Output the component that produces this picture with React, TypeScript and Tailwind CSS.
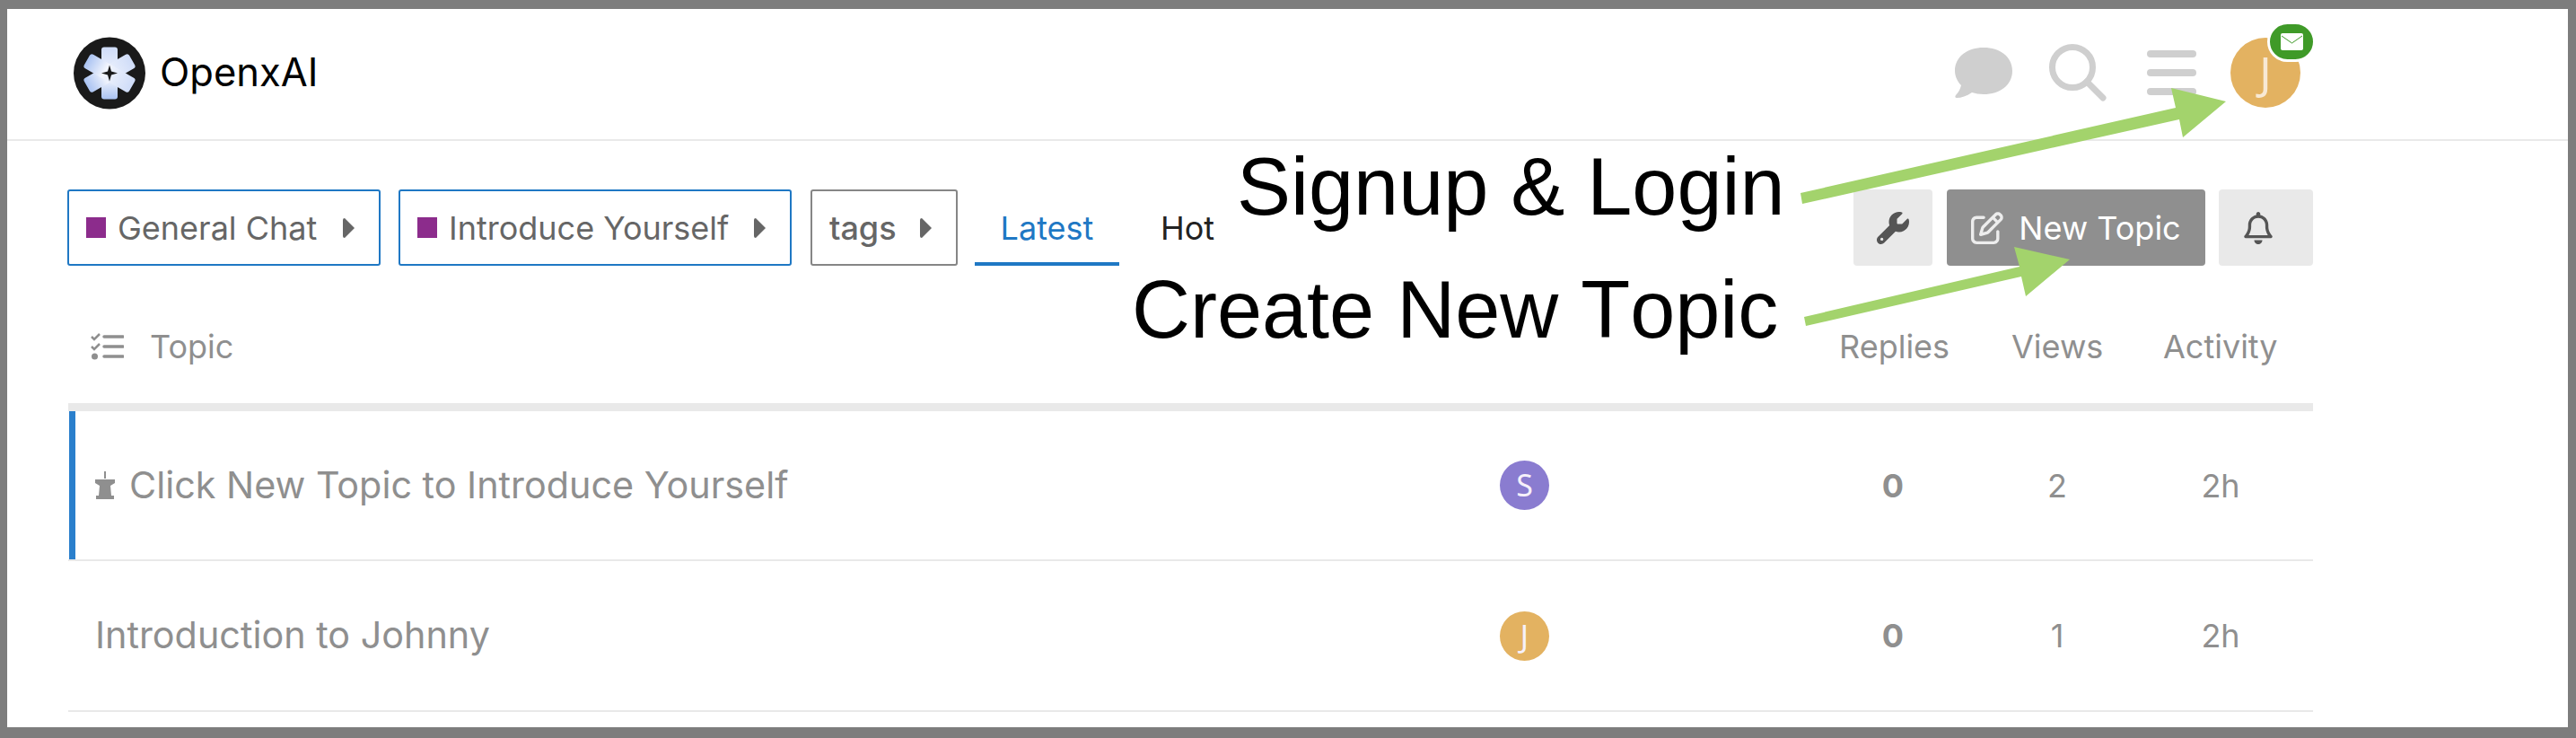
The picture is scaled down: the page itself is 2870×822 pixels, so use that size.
import { FaRegBell, FaRegPenToSquare, FaWrench } from "react-icons/fa6";

// Page is a Discourse topic list with two green call-out arrows laid over it.

const Crumb = ({
  label,
  dot,
  blue,
  width,
}: {
  label: string;
  dot?: boolean;
  blue?: boolean;
  width: string;
}) => (
  <div
    className={`flex h-[85px] items-center rounded-[3px] border-2 pr-[27px] pl-[19px] ${width} ${
      blue ? "border-[#1f78c4]" : "border-[#868686]"
    }`}
  >
    {dot && <span className="mr-[13px] h-[23px] w-[22px] bg-[#8c2c8c]" />}
    <span className={`text-[36px] text-[#666666] ${dot ? "font-normal" : "font-medium"}`}>{label}</span>
    <svg viewBox="0 0 13 22" className="ml-auto h-[22px] w-[13px] fill-[#666666]">
      <path d="M2 0 L13 11 L2 22 Q0 22 0 20 L0 2 Q0 0 2 0 Z" />
    </svg>
  </div>
);

const Avatar = ({ letter, color }: { letter: string; color: string }) => (
  <div
    className={`flex h-[55px] w-[55px] items-center justify-center rounded-full font-['Noto_Sans',sans-serif] text-[34px] text-[#f6f1fa] ${color}`}
  >
    {letter}
  </div>
);

const Row = ({
  title,
  pinned,
  letter,
  color,
  views,
}: {
  title: string;
  pinned?: boolean;
  letter: string;
  color: string;
  views: string;
}) => (
  <div
    className={`relative flex items-center border-b-2 border-[#e9e9e9] text-[#8f8f8f] ${
      pinned ? "h-[167px]" : "h-[168px]"
    }`}
  >
    {pinned && <span className="absolute top-0 bottom-0 left-px w-[7px] bg-[#2a7fcc]" />}
    <div className="flex w-[1595px] items-center pl-[30px] text-[41.3px]">
      {pinned && (
        <svg viewBox="0 0 22 31" className="mr-[16px] h-[31px] w-[22px] fill-[#8f8f8f]">
          <path d="M10 0h2v8h-2z M0 9h22v4l-5 3 1 11h3v4H1v-4h3l1-11-5-3z" />
        </svg>
      )}
      {title}
    </div>
    <Avatar letter={letter} color={color} />
    <div className="ml-[353px] w-[60px] text-center text-[36px] font-bold">0</div>
    <div className="ml-[123px] w-[60px] text-center text-[36px]">{views}</div>
    <div className="ml-[122px] w-[60px] text-center text-[36px]">2h</div>
  </div>
);

export default function App() {
  return (
    <div className="relative h-[822px] w-[2870px] overflow-hidden border-t-[10px] border-r-[9px] border-b-[12px] border-l-[8px] border-[#7d7d7d] bg-white font-['Inter',sans-serif]">
      <header className="flex h-[147px] items-center justify-between border-b-2 border-[#e9e9e9] pr-[298px] pb-[3px] pl-[74px]">
        <div className="flex items-center gap-[16px]">
          <svg viewBox="0 0 80 80" className="h-[81px] w-[80px]">
            <defs>
              <linearGradient id="star" x1="0" y1="0" x2="0" y2="1">
                <stop offset="0" stopColor="#cfdcf8" />
                <stop offset="0.6" stopColor="#f2f5fd" />
                <stop offset="1" stopColor="#a9c2f2" />
              </linearGradient>
            </defs>
            <circle cx="40" cy="40" r="40" fill="#1a1a1a" />
            <g fill="url(#star)">
              <rect x="31" y="11" width="18" height="58" rx="3" />
              <rect x="31" y="11" width="18" height="58" rx="3" transform="rotate(60 40 40)" />
              <rect x="31" y="11" width="18" height="58" rx="3" transform="rotate(120 40 40)" />
            </g>
            <path d="M40 31 L42 38 L49 40 L42 42 L40 49 L38 42 L31 40 L38 38 Z" fill="#1a1a1a" />
          </svg>
          <span className="text-[43.5px] text-black">OpenxAI</span>
        </div>
        <div className="flex items-center">
          <svg viewBox="0 0 64 56" className="h-[56px] w-[64px] fill-[#cfcfcf]">
            <path d="M32 0C50 0 64 10 64 26S50 52 32 52C27 52 23 51 19 50 13 54 7 56 2 56 0 56 0 54 1 53 4 50 6 46 7 42 3 38 0 32 0 26 0 10 14 0 32 0Z" />
          </svg>
          <svg viewBox="0 0 64 64" className="ml-[41px] h-[64px] w-[64px] fill-none stroke-[#cfcfcf] stroke-[7]">
            <circle cx="26" cy="26" r="22.5" />
            <path d="M42 42 L60 60" strokeLinecap="round" />
          </svg>
          <div className="ml-[45px] flex w-[55px] flex-col gap-[13px]">
            <span className="h-[8px] rounded-full bg-[#cfcfcf]" />
            <span className="h-[8px] rounded-full bg-[#cfcfcf]" />
            <span className="h-[8px] rounded-full bg-[#cfcfcf]" />
          </div>
          <div className="relative ml-[38px] flex h-[78px] w-[78px] items-center justify-center rounded-full bg-[#e3b261] font-['Noto_Sans',sans-serif] text-[49px] text-[#f8e9d4]">
            J
            <div className="absolute -top-[18px] -right-[17px] flex h-[45px] w-[54px] items-center justify-center rounded-full border-[3px] border-white bg-[#3f9a28]">
              <svg viewBox="0 0 25 19" className="h-[19px] w-[25px]">
                <rect width="25" height="19" rx="2" fill="#fff" />
                <path d="M1 3 L12.5 11 L24 3" fill="none" stroke="#3f9a28" strokeWidth="1" />
              </svg>
            </div>
          </div>
        </div>
      </header>

      <main className="pr-[284px] pl-[68px]">
        <div className="mt-[54px] flex h-[85px] items-center">
          <div className="-ml-px">
            <Crumb label="General Chat" dot blue width="w-[349px]" />
          </div>
          <div className="ml-[20px]">
            <Crumb label="Introduce Yourself" dot blue width="w-[438px]" />
          </div>
          <div className="ml-[21px]">
            <Crumb label="tags" width="w-[164px]" />
          </div>
          <div className="ml-[19px] flex h-[85px] w-[161px] items-center justify-center border-b-[4px] border-[#1f78c4] pt-[4px] text-[36px] text-[#1f78c4]">
            Latest
          </div>
          <div className="ml-[46px] text-[36px] text-[#222222]">Hot</div>
          <div className="ml-auto flex h-[85px] w-[88px] items-center justify-center rounded-[4px] bg-[#e9e9e9]">
            <FaWrench className="h-[36px] w-[36px] text-[#555555]" />
          </div>
          <div className="ml-[16px] flex h-[85px] w-[288px] items-center justify-center gap-[17px] rounded-[4px] bg-[#8f8f8f] text-[36px] text-white">
            <FaRegPenToSquare className="h-[36px] w-[36px] text-[#ededed]" />
            New Topic
          </div>
          <div className="ml-[15px] flex h-[85px] w-[105px] items-center justify-center rounded-[4px] bg-[#e9e9e9] pr-[18px]">
            <FaRegBell className="h-[36px] w-[36px] text-[#555555]" />
          </div>
        </div>

        <div className="flex h-[162px] items-center border-b-[9px] border-[#e9e9e9] pt-[26px] text-[36px] text-[#8f8f8f]">
          <div className="flex w-[1973px] items-center pl-[25px]">
            <svg viewBox="0 0 37 30" className="mr-[29px] h-[30px] w-[37px] fill-none stroke-[#8f8f8f] stroke-[3.5]">
              <path d="M1 4 L4 7 L10 1 M1 15 L4 18 L10 12" strokeWidth="2.5" />
              <path d="M15 4 H36 M15 15 H36 M15 26 H36" strokeLinecap="round" />
              <circle cx="4.5" cy="26" r="3.5" fill="#8f8f8f" stroke="none" />
            </svg>
            Topic
          </div>
          <div className="w-[192px]">Replies</div>
          <div className="w-[169px]">Views</div>
          <div>Activity</div>
        </div>

        <Row title="Click New Topic to Introduce Yourself" pinned letter="S" color="bg-[#8a7cd0]" views="2" />
        <Row title="Introduction to Johnny" letter="J" color="bg-[#e3b261]" views="1" />
      </main>

      {/* call-outs sit on top of the page */}
      <svg
        viewBox="0 0 2870 822"
        className="pointer-events-none absolute -top-[10px] -left-[8px] h-[822px] w-[2870px]"
      >
        <path
          d="M2006 215 L2424 120 L2419 98 L2480 113 L2432 153 L2428 133 L2008 227 Z"
          fill="#a3d36c"
        />
        <path
          d="M2010 353 L2250 297 L2244 275 L2306 289 L2257 330 L2252 308 L2012 363 Z"
          fill="#a3d36c"
        />
      </svg>
      <div className="absolute top-[153px] left-[1370px] font-['Liberation_Sans',sans-serif] text-[90px] leading-none text-black [font-kerning:none]">
        Signup &amp; Login
      </div>
      <div className="absolute top-[290px] left-[1253px] font-['Liberation_Sans',sans-serif] text-[90px] leading-none text-black [font-kerning:none]">
        Create New Topic
      </div>
    </div>
  );
}
